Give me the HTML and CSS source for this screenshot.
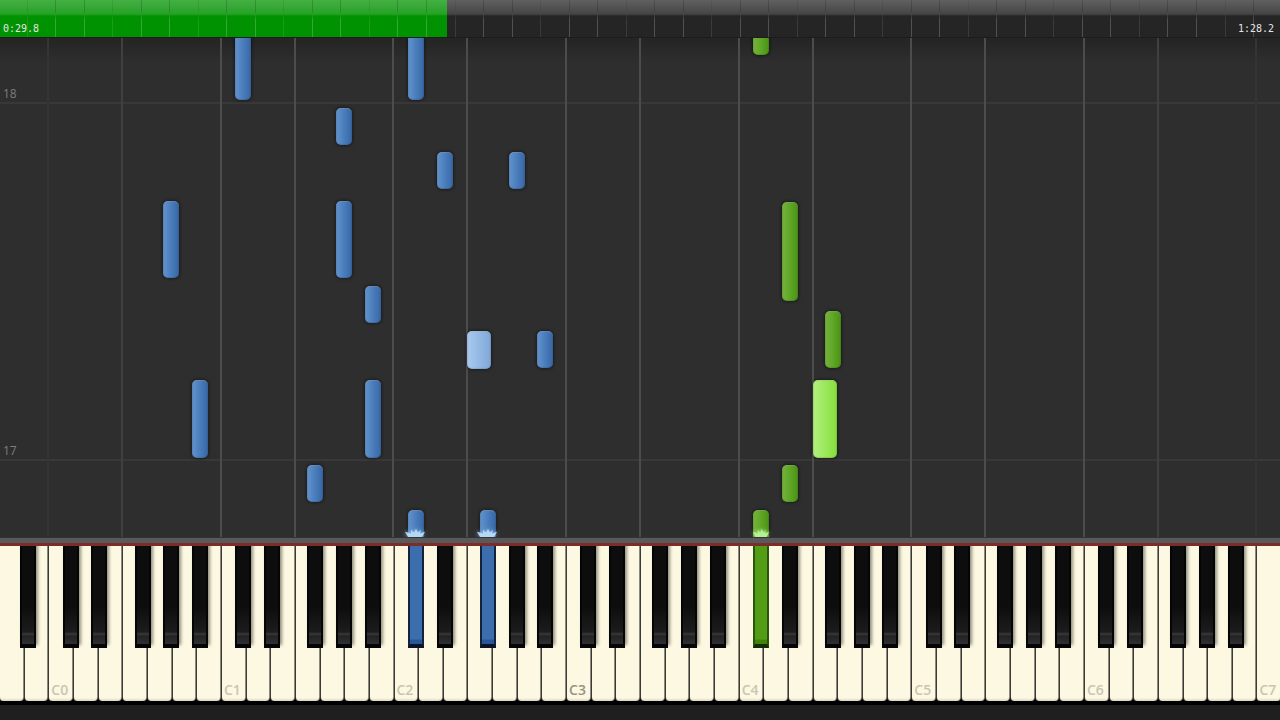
FILE: index.html
```html
<!DOCTYPE html>
<html lang="en">
<head>
  <meta charset="UTF-8">
  <title>Piano roll</title>
  <link rel="stylesheet" href="styles.css">
</head>
<body>
  <header class="timeline">
    <input class="seek" type="range" min="0" max="882" value="298" aria-label="Song position">
    <div class="ticks" id="ticks"></div>
    <div class="times">
      <span>0:29.8</span>
      <span>1:28.2</span>
    </div>
  </header>

  <main class="roll">
    <div class="measures">
      <div class="measure" style="bottom: 433px"><span>18</span></div>
      <div class="measure" style="bottom: 76px"><span>17</span></div>
    </div>
    <div class="lane" id="lane"></div>
  </main>

  <div class="rail"></div>
  <div class="keyboard">
    <div class="keys" id="keys"></div>
  </div>
  <footer class="base"></footer>

  <script src="piano.js"></script>
</body>
</html>
```
FILE: styles.css
```css
* {
  box-sizing: border-box;
}
body {
  display: flex;
  flex-direction: column;
  min-height: 100vh;
  margin: 0;
  overflow: hidden;
  background: #2e2e2e;
  font-family: "Open Sans", "Noto Sans", sans-serif;
}
button {
  padding: 0;
  border: 0;
  font: inherit;
}

/* Timeline */
.timeline {
  position: relative;
  height: 38px;
  border-bottom: 1px solid #1c1c1c;
}
.seek {
  display: block;
  width: 100%;
  height: 37px;
  margin: 0;
  appearance: none;
  background:
    linear-gradient(rgba(255, 255, 255, 0.27), rgba(255, 255, 255, 0.15) 14px, transparent 16px),
    linear-gradient(to right, #009200 var(--progress, 35%), #252525 var(--progress, 35%));
}
.seek::-webkit-slider-thumb {
  appearance: none;
  width: 1px;
  height: 37px;
}
.ticks, .times {
  position: absolute;
  inset: 0;
  pointer-events: none;
}
.tick {
  position: absolute;
  top: 0;
  width: 1px;
  height: 37px;
  background: linear-gradient(rgba(0, 0, 0, 0.16) 11px, rgba(255, 255, 255, 0.2) 20px);
}
.tick:nth-child(3n + 1) {
  opacity: 0.5;
}
.times {
  display: flex;
  justify-content: space-between;
  align-items: flex-end;
  padding: 0 6px 2px 3px;
  color: #e4e4e4;
  font-family: "DejaVu Sans Mono", monospace;
  font-size: 10px;
  line-height: 12px;
}

/* Falling notes */
.roll {
  position: relative;
  flex: 1;
  overflow: hidden;
  background: linear-gradient(#242424, #2e2e2e 24px);
}
.measure {
  position: absolute;
  left: 0;
  right: 0;
  border-bottom: 2px solid #383838;
}
.measure span {
  display: block;
  padding-left: 3px;
  color: #7c7c7c;
  font-size: 12px;
  line-height: 16px;
}
.lane {
  position: absolute;
  inset: 0 -1px;
}
.guide {
  position: absolute;
  top: 0;
  bottom: 0;
  width: 2px;
  margin-left: -1px;
  background: #4c4c4c;
}
.guide.dim {
  background: #404040;
}
.guide.faint {
  background: #343434;
}
.note {
  position: absolute;
  width: 16px;
  border-radius: 5px;
  box-shadow: inset 0 1px 1px rgba(255, 255, 255, 0.2), inset 0 0 1px 1px rgba(0, 0, 0, 0.12), 0 0 3px 1px rgba(0, 0, 0, 0.4);
}
.note.wide {
  width: 24px;
}
.note.left {
  background: linear-gradient(to right, #6394cf, #4a7dbb 50%, #3767a6);
}
.note.left.wide {
  background: linear-gradient(to right, #a9caf0, #7fa7d7);
}
.note.right {
  background: linear-gradient(to right, #77b340, #5ea725 50%, #4b9215);
}
.note.right.wide {
  background: linear-gradient(to right, #b3f17d, #86df3b);
}
.note.playing {
  border-radius: 5px 5px 0 0;
}
.spark {
  position: absolute;
  left: -3px;
  bottom: 0;
  width: 20px;
  height: 8px;
  filter: drop-shadow(0 0 2px #8fc0f0);
}
.left .spark {
  fill: #b5d6f5;
}
.right .spark {
  left: 0;
  width: 16px;
  fill: #b5f294;
  filter: drop-shadow(0 0 2px #b5f294);
}

/* Keyboard */
.rail {
  height: 9px;
  background: linear-gradient(#333 1px, #59595b 1px, #59595b 6px, #7d2c29 6px);
}
.keyboard {
  overflow: hidden;
  background: #000;
}
.keys {
  position: relative;
  display: flex;
  height: 155px;
  margin: 0 -1px;
}
.white {
  display: flex;
  flex: 1;
  align-items: flex-end;
  min-width: 0;
  padding: 0 0 1px 2px;
  border-left: 1px solid #3b3a36;
  border-right: 1px solid #8c897e;
  border-radius: 0 0 4px 4px;
  background: linear-gradient(#fdf8e2 152px, #d9d5c3);
  color: #cbc5b0;
  font-size: 14px;
  font-weight: 600;
  line-height: 20px;
}
.white.middle {
  color: #98937f;
}
.black {
  position: absolute;
  top: 0;
  width: 16px;
  height: 102px;
  border: solid #050505;
  border-width: 0 2px 4px;
  background: linear-gradient(#0d0d0d 60px, #1c1c1c 86px, #3a3a3c 88px, #222224 90px, #303033);
  box-shadow: 2px -3px 3px rgba(40, 40, 30, 0.5);
}
.black.left {
  border-color: #13233e;
  border-bottom-color: #0a1424;
  background: linear-gradient(#3c6eae 93px, #2a579a 94px);
  box-shadow: none;
}
.black.right {
  border-color: #2c5411;
  border-bottom-color: #142c05;
  background: linear-gradient(#539d16 93px, #418508 94px);
  box-shadow: none;
}
.base {
  height: 19px;
  border-top: 4px solid #000;
  background: #1f1f1f;
}
```
FILE: piano.js
```js
const WHITE_KEYS = 52;
const OCTAVE = 7 / WHITE_KEYS * 100;
const C0 = 2 / WHITE_KEYS * 100;
const WHITE_NAMES = ['C', 'D', 'E', 'F', 'G', 'A', 'B'];
const SHARPS = { 'C#': 1, 'D#': 3, 'F#': 6, 'G#': 8, 'A#': 10 };

// key, octave, hand, distance from the rail, length
const notes = [
  ['C#', 1, 'left', 437, 90], ['C#', 2, 'left', 437, 90], ['C#', 4, 'right', 482, 90],
  ['G#', 1, 'left', 392, 37],
  ['D#', 2, 'left', 348, 37], ['G#', 2, 'left', 348, 37],
  ['G#', 0, 'left', 259, 77], ['G#', 1, 'left', 259, 77], ['D#', 4, 'right', 236, 99],
  ['A#', 1, 'left', 214, 37],
  ['F#', 4, 'right', 169, 57],
  ['F', 2, 'left', 168, 38], ['A#', 2, 'left', 169, 37],
  ['A#', 0, 'left', 79, 78], ['A#', 1, 'left', 79, 78], ['F', 4, 'right', 79, 78],
  ['F#', 1, 'left', 35, 37], ['D#', 4, 'right', 35, 37],
  ['C#', 2, 'left', 0, 27, true], ['F#', 2, 'left', 0, 27, true], ['C#', 4, 'right', 0, 27, true]
];

const pressed = { 'C#2': 'left', 'F#2': 'left', 'C#4': 'right' };

const spark = `<svg class="spark" viewBox="0 0 20 9" preserveAspectRatio="none" aria-hidden="true">
  <path d="M0 3 L6 5 L6 1 L9 4 L11 0 L13 4 L16 1 L15 5 L20 3 L17 9 H3 Z"/></svg>`;

function keyLeft(name, octave) {
  const start = C0 + octave * OCTAVE;
  if (name in SHARPS) {
    return start + SHARPS[name] * OCTAVE / 12;
  }
  return start + WHITE_NAMES.indexOf(name) * OCTAVE / 7;
}

function drawTicks() {
  let html = '';
  for (let i = 0; i < 44; i++) {
    html += `<span class="tick" style="left: ${2.09 + i * 2.228}%"></span>`;
  }
  document.getElementById('ticks').innerHTML = html;
}

function drawLane() {
  let html = '';
  for (let octave = 0; octave <= 7; octave++) {
    const edge = octave === 0 || octave === 7;
    html += `<div class="guide ${edge ? 'faint' : ''}" style="left: ${keyLeft('C', octave)}%"></div>`;
    if (octave < 7) {
      const dim = octave === 0 || octave === 6;
      html += `<div class="guide ${dim ? 'dim' : ''}" style="left: ${keyLeft('F', octave)}%"></div>`;
    }
  }
  notes.forEach(([name, octave, hand, bottom, length, playing]) => {
    const wide = name in SHARPS ? '' : 'wide';
    html += `<div class="note ${hand} ${wide} ${playing ? 'playing' : ''}"
      style="left: ${keyLeft(name, octave)}%; bottom: ${bottom}px; height: ${length}px">${playing ? spark : ''}</div>`;
  });
  document.getElementById('lane').innerHTML = html;
}

function drawKeys() {
  let html = '';
  for (let i = 0; i < WHITE_KEYS; i++) {
    const name = WHITE_NAMES[(i + 5) % 7];
    const octave = Math.floor((i + 5) / 7) - 1;
    const label = name === 'C' ? name + octave : '';
    html += `<button class="white ${label === 'C3' ? 'middle' : ''}" aria-label="${name}${octave}">${label}</button>`;
  }
  for (let octave = -1; octave < 7; octave++) {
    for (const name in SHARPS) {
      if (octave === -1 && name !== 'A#') continue;
      const id = name + octave;
      html += `<button class="black ${pressed[id] || ''}" aria-label="${id}" style="left: ${keyLeft(name, octave)}%"></button>`;
    }
  }
  document.getElementById('keys').innerHTML = html;
}

// the song clock starts slightly before zero, so the bar runs ahead of the time
const seek = document.querySelector('.seek');
function updateSeek() {
  const lead = 15;
  seek.style.setProperty('--progress', (Number(seek.value) + lead) / (Number(seek.max) + lead) * 100 + '%');
}
seek.addEventListener('input', updateSeek);

updateSeek();
drawTicks();
drawLane();
drawKeys();
```
